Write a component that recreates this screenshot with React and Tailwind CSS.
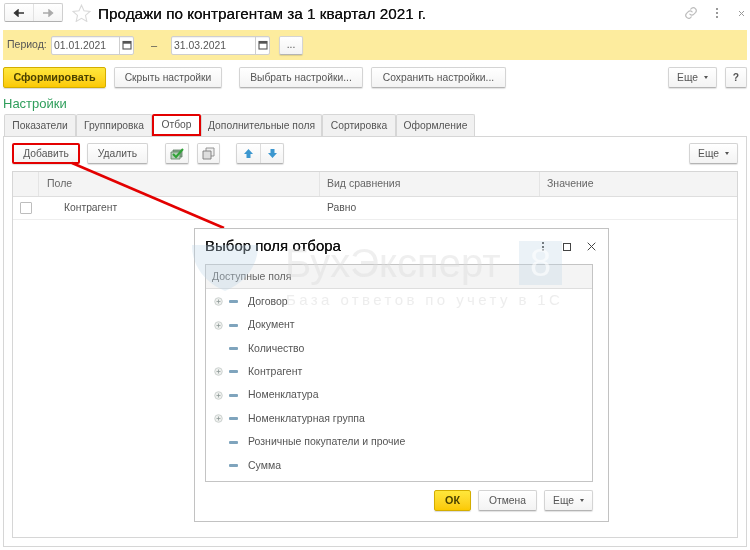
import React from "react";

const btn = "flex items-center justify-center rounded-[2px] border border-[#d4d4d4] border-b-[#b4b4b4] bg-gradient-to-b from-white to-[#f3f3f3] shadow-[0_1px_1px_rgba(0,0,0,0.12)] text-[10.3px] text-[#555]";
const yellow = "flex items-center justify-center rounded-[2px] border border-[#d3ad00] bg-gradient-to-b from-[#ffe73a] to-[#fbc900] shadow-[0_1px_1px_rgba(0,0,0,0.15)] text-[10.8px] font-bold text-[#4a4200]";

function Caret() {
  return <span className="ml-[6px] inline-block h-0 w-0 border-x-[2.5px] border-t-[3px] border-x-transparent border-t-[#555]" />;
}

function Cal() {
  return (
    <svg width="10" height="10" viewBox="0 0 10 10">
      <rect x="1" y="1.5" width="8" height="7.5" fill="none" stroke="#555" strokeWidth="1.1" />
      <rect x="1" y="1.5" width="8" height="2.2" fill="#555" />
    </svg>
  );
}

function DateInput({ value, w }) {
  return (
    <div className={`flex h-[19px] items-stretch rounded-[2px] border border-[#cfcfcf] bg-white shadow-[inset_0_1px_1px_rgba(0,0,0,0.06)] ${w}`}>
      <span className="flex-1 pl-[2px] text-[10.4px] leading-[17px] text-[#555]">{value}</span>
      <span className="flex w-[14px] items-center justify-center border-l border-[#cfcfcf]"><Cal /></span>
    </div>
  );
}

function Tab({ label, w, active }) {
  return (
    <div className={`flex h-[22px] items-center justify-center rounded-t-[2px] border border-b-0 text-[10.3px] text-[#555] ${w} ${active ? "border-[#e30000] border-2 border-b-2 bg-white" : "border-[#d6d6d6] bg-[#f1f1f1]"}`}>
      {label}
    </div>
  );
}

function TreeRow({ label, exp }) {
  return (
    <div className="flex h-[23.4px] items-center text-[10.5px] text-[#555]">
      <span className="flex w-[9px] h-[9px] ml-[8px] items-center justify-center">
        {exp && (
          <svg width="9" height="9" viewBox="0 0 9 9">
            <circle cx="4.5" cy="4.5" r="3.8" fill="#eef0ee" stroke="#c4cac8" strokeWidth="0.8" />
            <path d="M2.5 4.5h4M4.5 2.5v4" stroke="#8f9a98" strokeWidth="0.8" />
          </svg>
        )}
      </span>
      <span className="ml-[6px] h-[3px] w-[9px] rounded-[1px] bg-[#7fa4bd]" />
      <span className="ml-[10px]">{label}</span>
    </div>
  );
}

export default function App() {
  return (
    <div className="relative h-[550px] w-[750px] overflow-hidden bg-white font-['Liberation_Sans',Arial,sans-serif] blur-[0.3px]">
      {/* Title row */}
      <div className="flex h-[30px] items-start pl-[4px] pt-[3px]">
        <div className="flex h-[19px] w-[59px] rounded-[2px] border border-[#cfcfcf] border-b-[#b0b0b0] bg-gradient-to-b from-white to-[#f5f5f5]">
          <span className="flex w-[29px] items-center justify-center border-r border-[#e2e2e2]">
            <svg width="12" height="8" viewBox="0 0 12 8"><path d="M11 4H3M5 1L1.5 4 5 7z" fill="#333" stroke="#333" strokeWidth="1.4" /></svg>
          </span>
          <span className="flex flex-1 items-center justify-center">
            <svg width="12" height="8" viewBox="0 0 12 8"><path d="M1 4h8M7 1l3.5 3L7 7z" fill="#aaa" stroke="#aaa" strokeWidth="1.4" /></svg>
          </span>
        </div>
        <svg className="ml-[9px] mt-[1px]" width="19" height="18" viewBox="0 0 19 18">
          <path d="M9.5 1.2l2.5 5.6 6 .6-4.5 4 1.3 6-5.3-3.1-5.3 3.1 1.3-6L1 7.4l6-.6z" fill="none" stroke="#d9d9d9" strokeWidth="1.1" />
        </svg>
        <h1 className="ml-[7px] mt-[1px] text-[15.3px] leading-[20px] font-normal text-[#111] [text-shadow:0_0_0.4px_#111]">Продажи по контрагентам за 1 квартал 2021 г.</h1>
        <div className="ml-auto mr-[5px] flex items-center pt-[3px]">
          <svg width="14" height="14" viewBox="0 0 24 24" fill="none" stroke="#bdbdbd" strokeWidth="2" strokeLinecap="round">
            <path d="M10 14a5 5 0 0 0 7 0l3-3a5 5 0 0 0-7-7l-1.5 1.5" />
            <path d="M14 10a5 5 0 0 0-7 0l-3 3a5 5 0 0 0 7 7l1.5-1.5" />
          </svg>
          <span className="ml-[18px] flex flex-col gap-[2px]">
            <i className="block h-[2px] w-[2px] bg-[#999]" /><i className="block h-[2px] w-[2px] bg-[#999]" /><i className="block h-[2px] w-[2px] bg-[#999]" />
          </span>
          <svg className="ml-[20px]" width="7" height="7" viewBox="0 0 7 7"><path d="M1 1l5 5M6 1L1 6" stroke="#999" strokeWidth="1" /></svg>
        </div>
      </div>

      {/* Period bar */}
      <div className="mx-[3px] flex h-[30px] items-center bg-[#fdec9e] pl-[4px]">
        <span className="w-[44px] text-[10.5px] text-[#555]">Период:</span>
        <DateInput value="01.01.2021" w="w-[83px]" />
        <span className="w-[37px] pl-[17px] text-[11px] text-[#555]">–</span>
        <DateInput value="31.03.2021" w="w-[99px]" />
        <div className={`${btn} ml-[9px] h-[19px] w-[24px]`}>...</div>
      </div>

      {/* Command bar */}
      <div className="mx-[3px] mt-[7px] flex h-[21px] items-stretch">
        <div className={`${yellow} w-[103px]`}>Сформировать</div>
        <div className={`${btn} ml-[8px] w-[108px]`}>Скрыть настройки</div>
        <div className={`${btn} ml-[17px] w-[124px]`}>Выбрать настройки...</div>
        <div className={`${btn} ml-[8px] w-[135px]`}>Сохранить настройки...</div>
        <div className={`${btn} ml-auto w-[49px]`}>Еще<Caret /></div>
        <div className={`${btn} ml-[8px] w-[22px] font-bold`}>?</div>
      </div>

      <div className="ml-[3px] mt-[8px] h-[18px] text-[13px] leading-[15px] text-[#2f9e5b]">Настройки</div>

      {/* Tabs */}
      <div className="ml-[4px] flex h-[22px] items-stretch">
        <Tab label="Показатели" w="w-[72px]" />
        <Tab label="Группировка" w="w-[76px]" />
        <Tab label="Отбор" w="w-[49px]" active />
        <Tab label="Дополнительные поля" w="w-[121px]" />
        <Tab label="Сортировка" w="w-[74px]" />
        <Tab label="Оформление" w="w-[79px]" />
      </div>

      {/* Panel */}
      <div className="mx-[3px] h-[411px] border border-[#d6d6d6] px-[8px] pt-[6px]">
        <div className="flex h-[21px] items-stretch">
          <div className={`${btn} w-[68px] !border-2 !border-[#e30000]`}>Добавить</div>
          <div className={`${btn} ml-[7px] w-[61px]`}>Удалить</div>
          <div className={`${btn} ml-[17px] w-[24px]`}>
            <svg width="14" height="13" viewBox="0 0 14 13">
              <path d="M3 3h9v7H3z" fill="#8aa88f" stroke="#5d7f62" strokeWidth="0.8" />
              <path d="M1 5h9v7H1z" fill="#b9d0bb" stroke="#5d7f62" strokeWidth="0.8" />
              <path d="M3 7l3 3 7-8" fill="none" stroke="#2fa336" strokeWidth="2" />
            </svg>
          </div>
          <div className={`${btn} ml-[8px] w-[23px]`}>
            <svg width="13" height="13" viewBox="0 0 13 13">
              <path d="M4 1h8v8H4z" fill="#efefef" stroke="#8b8b8b" strokeWidth="0.9" />
              <path d="M1 4h8v8H1z" fill="#dedede" stroke="#7b7b7b" strokeWidth="0.9" />
            </svg>
          </div>
          <div className={`${btn} ml-[16px] w-[48px] !justify-start`}>
            <span className="flex h-full w-[24px] items-center justify-center border-r border-[#dcdcdc]">
              <svg width="11" height="11" viewBox="0 0 11 11"><path d="M5.5 1L10 6H7.5v4h-4V6H1z" fill="#3c97cf" /></svg>
            </span>
            <span className="flex h-full flex-1 items-center justify-center">
              <svg width="11" height="11" viewBox="0 0 11 11"><path d="M5.5 10L10 5H7.5V1h-4v4H1z" fill="#3c97cf" /></svg>
            </span>
          </div>
          <div className={`${btn} ml-auto w-[49px]`}>Еще<Caret /></div>
        </div>

        {/* Table */}
        <div className="mt-[7px] h-[367px] border border-[#d6d6d6]">
          <div className="flex h-[25px] items-center border-b border-[#dedede] bg-[#f4f4f4] text-[10.5px] text-[#666]">
            <span className="h-full w-[26px] border-r border-[#e4e4e4]" />
            <span className="flex h-full w-[281px] items-center border-r border-[#e4e4e4] pl-[8px]">Поле</span>
            <span className="flex h-full w-[220px] items-center border-r border-[#e4e4e4] pl-[7px]">Вид сравнения</span>
            <span className="pl-[7px]">Значение</span>
          </div>
          <div className="flex h-[23px] items-center border-b border-[#eeeeee] text-[10.3px] text-[#555]">
            <span className="ml-[7px] h-[12px] w-[12px] rounded-[1px] border border-[#bdbdbd] bg-white" />
            <span className="ml-[32px] w-[263px]">Контрагент</span>
            <span>Равно</span>
          </div>
        </div>
      </div>

      {/* Callout line */}
      <svg className="pointer-events-none absolute left-0 top-0" width="750" height="550">
        <line x1="72" y1="163" x2="224" y2="228" stroke="#e30000" strokeWidth="2.5" />
      </svg>

      {/* Dialog */}
      <div className="absolute left-[194px] top-[228px] h-[294px] w-[415px] border border-[#c2c2c2] bg-white px-[10px]">
        <div className="flex h-[35px] items-center">
          <span className="text-[15px] text-[#111] [text-shadow:0_0_0.4px_#111]">Выбор поля отбора</span>
          <div className="ml-auto mr-[2px] flex items-center">
            <span className="flex flex-col gap-[1.5px]">
              <i className="block h-[2px] w-[2px] bg-[#555]" /><i className="block h-[2px] w-[2px] bg-[#555]" /><i className="block h-[2px] w-[2px] bg-[#555]" />
            </span>
            <span className="ml-[19px] h-[8px] w-[8px] border border-[#444]" />
            <svg className="ml-[16px]" width="9" height="9" viewBox="0 0 9 9"><path d="M.7.7l7.6 7.6M8.3.7L.7 8.3" stroke="#444" strokeWidth="1" /></svg>
          </div>
        </div>
        <div className="h-[218px] w-[388px] border border-[#c4c4c4]">
          <div className="flex h-[24px] items-center border-b border-[#dedede] bg-[#f4f4f4] pl-[6px] text-[10.5px] text-[#666]">Доступные поля</div>
          <div className="pt-[1px]">
            <TreeRow label="Договор" exp />
            <TreeRow label="Документ" exp />
            <TreeRow label="Количество" />
            <TreeRow label="Контрагент" exp />
            <TreeRow label="Номенклатура" exp />
            <TreeRow label="Номенклатурная группа" exp />
            <TreeRow label="Розничные покупатели и прочие" />
            <TreeRow label="Сумма" />
          </div>
        </div>
        <div className="mt-[8px] flex h-[21px] w-[388px] items-stretch justify-end">
          <div className={`${yellow} w-[37px]`}>ОК</div>
          <div className={`${btn} ml-[7px] w-[59px]`}>Отмена</div>
          <div className={`${btn} ml-[7px] w-[49px]`}>Еще<Caret /></div>
        </div>
      </div>

      {/* Watermark */}
      <div className="pointer-events-none absolute left-[190px] top-[241px] h-[70px] w-[380px]">
        <svg className="absolute left-0 top-[2px]" width="70" height="50" viewBox="0 0 70 50">
          <path d="M2 2h66c0 22-14 38-33 46C16 40 2 24 2 2z" fill="#bcd5e6" fillOpacity="0.32" />
        </svg>
        <span className="absolute left-[95px] top-0 text-[40px] leading-[44px] text-[#dcdcdc]/45">БухЭксперт</span>
        <span className="absolute left-[96px] top-[50px] text-[15px] leading-[17px] tracking-[3.4px] text-[#dcdcdc]/50">База ответов по учету в 1С</span>
        <span className="absolute left-[329px] top-0 flex h-[44px] w-[43px] items-center justify-center bg-[#bcd5e6]/30 text-[38px] leading-none text-white/60">8</span>
      </div>
    </div>
  );
}
